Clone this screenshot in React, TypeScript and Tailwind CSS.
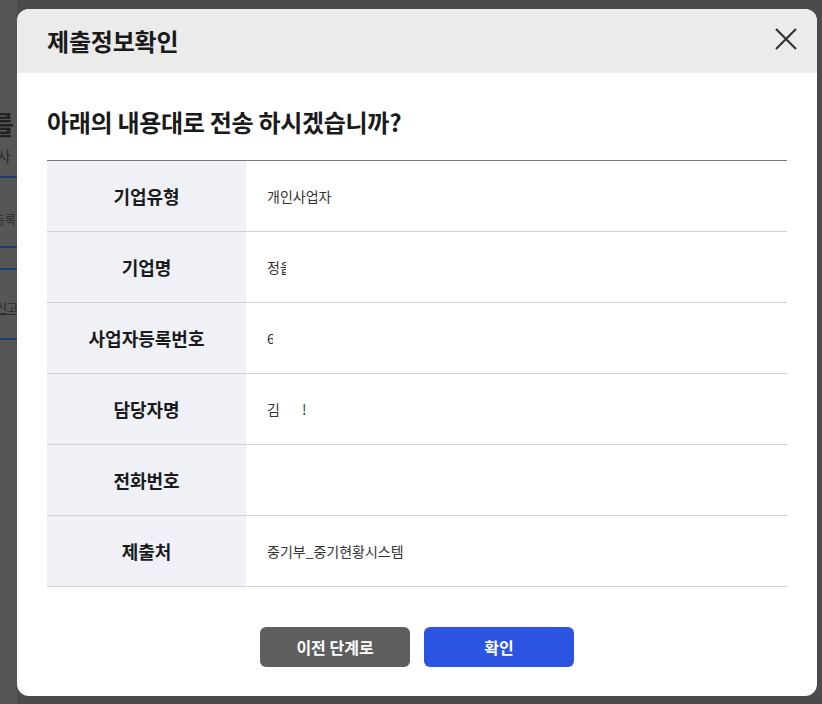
import React from "react";

const rows: { label: string; value: React.ReactNode }[] = [
  { label: "기업유형", value: <span>개인사업자</span> },
  {
    label: "기업명",
    value: (
      <span className="flex items-center">
        정<span className="inline-block w-[6px] overflow-hidden">읕</span>
      </span>
    ),
  },
  {
    label: "사업자등록번호",
    value: <span className="inline-block w-[6px] overflow-hidden">6</span>,
  },
  {
    label: "담당자명",
    value: (
      <span className="flex items-center gap-[22px]">
        <span>김</span>
        <span>!</span>
      </span>
    ),
  },
  { label: "전화번호", value: <span></span> },
  { label: "제출처", value: <span>중기부_중기현황시스템</span> },
];

export default function App() {
  return (
    <div
      className="relative w-[822px] h-[704px] overflow-hidden bg-[#4b4b4b]"
      style={{ fontFamily: '"Noto Sans CJK KR", "Noto Sans", sans-serif' }}
    >
      {/* dimmed page behind the modal */}
      <div className="flex flex-col w-[17px] h-full bg-[#565656] text-[#1e1e1e] overflow-hidden whitespace-nowrap">
        <div className="h-[108px]" />
        <div className="ml-[-10px] text-[26px] font-bold leading-[32px] text-[#222]">를</div>
        <div className="ml-[-3px] mt-[6px] text-[15px] leading-[20px] text-[#2a2a2a]">사</div>
        <div className="mt-[10px] h-[2px] w-full bg-[#1f3a6e]" />
        <div className="ml-[-6px] mt-[34px] text-[12px] leading-[16px] text-[#2a2a2a]">등록</div>
        <div className="mt-[18px] h-[2px] w-full bg-[#1f3a6e]" />
        <div className="mt-[20px] h-[2px] w-full bg-[#1f3a6e]" />
        <div className="ml-[-4px] mt-[30px] text-[12px] leading-[16px] text-[#2a2a2a] underline">신고</div>
        <div className="mt-[22px] h-[2px] w-full bg-[#1f3a6e]" />
      </div>

      {/* modal */}
      <div className="absolute left-[17px] top-[9px] w-[800px] h-[687px] rounded-[12px] bg-white overflow-hidden flex flex-col">
        <div className="h-[64px] bg-[#ebebeb] flex items-center justify-between pl-[30px] pr-[19px]">
          <h1 className="text-[24px] font-bold text-[#1a1a1a] leading-none tracking-[-0.2px]">
            제출정보확인
          </h1>
          <svg width="24" height="24" viewBox="0 0 24 24" className="mb-[2px]">
            <path d="M2 1 L22 21 M22 1 L2 21" stroke="#333" strokeWidth="2.2" strokeLinecap="butt" />
          </svg>
        </div>

        <div className="px-[30px] flex flex-col flex-1">
          <h2 className="mt-[33px] text-[24px] font-semibold text-[#1a1a1a] leading-[32px] tracking-[-0.3px]">
            아래의 내용대로 전송 하시겠습니까?
          </h2>

          <div className="mt-[22px] border-t border-[#7a7a7a] flex flex-col">
            {rows.map((r) => (
              <div key={r.label} className="flex h-[71px] border-b border-[#d2d2d2]">
                <div className="w-[199px] bg-[#f0f1f6] flex items-center justify-center text-[18px] font-bold text-[#1a1a1a]">
                  {r.label}
                </div>
                <div className="flex-1 flex items-center pl-[21px] text-[14px] text-[#333]">
                  {r.value}
                </div>
              </div>
            ))}
          </div>

          <div className="mt-[40px] flex justify-center gap-[14px]">
            <button className="w-[150px] h-[40px] rounded-[6px] bg-[#5e5e5e] text-white text-[16px] font-bold">
              이전 단계로
            </button>
            <button className="w-[150px] h-[40px] rounded-[6px] bg-[#2b54e2] text-white text-[16px] font-bold">
              확인
            </button>
          </div>
        </div>
      </div>
    </div>
  );
}
